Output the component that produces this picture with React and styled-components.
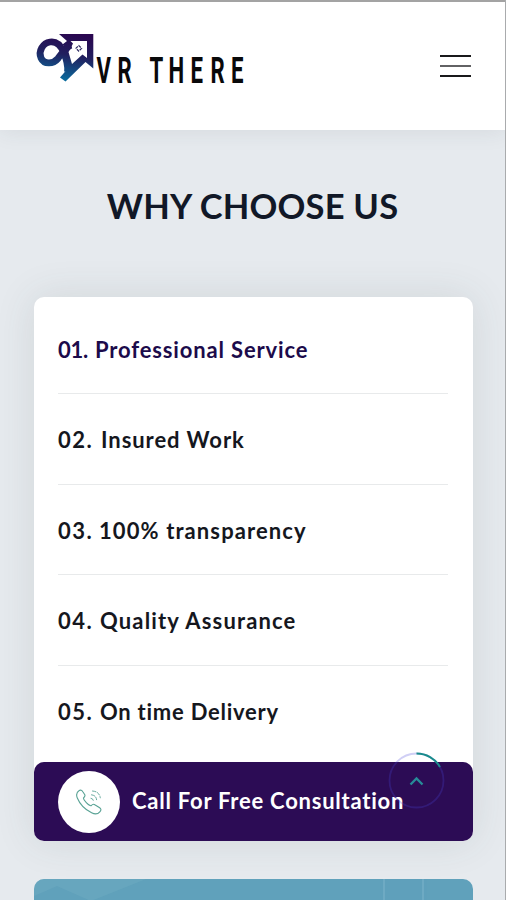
import React from "react";
import styled, { createGlobalStyle } from "styled-components";

const GlobalStyle = createGlobalStyle`
  * {
    box-sizing: border-box;
  }
  body {
    margin: 0;
    background: #e6eaee;
    font-family: Lato, "Open Sans", sans-serif;
  }
`;

const Page = styled.div`
  position: relative;
  height: 900px;
  overflow: hidden;
  background: #e6eaee;
  border-right: 1px solid #a9abad;
`;

const Header = styled.header`
  position: relative;
  display: flex;
  align-items: flex-start;
  justify-content: space-between;
  height: 130px;
  padding: 28px 34px 0 34px;
  background: #fff;
  border-top: 2px solid #a3a3a3;
  box-shadow: 0 0 22px rgba(40, 60, 70, 0.1);
`;

const Logo = styled.svg`
  display: block;
  width: 214px;
  height: 60px;
`;

const MenuButton = styled.button`
  display: flex;
  flex-direction: column;
  gap: 8px;
  margin-top: 25px;
  padding: 0;
  border: 0;
  background: none;

  span {
    width: 31px;
    height: 2px;
    background: #19191b;
  }
  span:nth-child(2) {
    background: #626264;
  }
`;

const Title = styled.h1`
  margin: 0;
  padding-top: 56px;
  height: 167px;
  color: #111827;
  font-size: 34.5px;
  font-weight: 700;
  line-height: 40px;
  text-align: center;
  white-space: nowrap;
  letter-spacing: 0.2px;
`;

const Card = styled.section`
  width: 439px;
  height: 544px;
  margin-left: 34px;
  display: flex;
  flex-direction: column;
  justify-content: space-between;
  border-radius: 10px;
  background: #fff;
  box-shadow: 0 0 40px rgba(60, 70, 70, 0.12);
`;

const List = styled.ul`
  margin: 0;
  padding: 6.5px 25px 0 24px;
  list-style: none;
`;

const Item = styled.li`
  display: flex;
  align-items: center;
  height: 90.5px;
  padding-top: 3px;
  border-bottom: 1px solid ${({ $last }) => ($last ? "transparent" : "#e8eaeb")};
  color: ${({ $active }) => ($active ? "#1c0b4b" : "#15171e")};
  font-size: 22px;
  font-weight: 700;
  line-height: 28px;
  white-space: nowrap;
  letter-spacing: ${({ $spacing }) => $spacing}px;
`;

const ItemNumber = styled.span`
  width: ${({ $width }) => $width}px;
  letter-spacing: ${({ $width }) => ($width > 40 ? 1.5 : -0.3)}px;
`;

const CallBar = styled.a`
  display: flex;
  align-items: center;
  gap: 12px;
  flex: none;
  height: 79px;
  padding-left: 24px;
  border-radius: 10px;
  background: #2c0c55;
  color: #fff;
  font-size: 22px;
  font-weight: 700;
  white-space: nowrap;
  letter-spacing: 0.76px;
`;

const CallLabel = styled.span`
  padding-bottom: 3px;
`;

const CallIcon = styled.span`
  display: flex;
  align-items: center;
  justify-content: center;
  width: 62px;
  height: 62px;
  border-radius: 50%;
  background: #fff;
`;

const Banner = styled.svg`
  display: block;
  width: 439px;
  height: 60px;
  margin: 38px 0 0 34px;
  border-radius: 10px;
  background: #60a1bb;
`;

const ScrollTop = styled.button`
  position: absolute;
  top: 752px;
  left: 388px;
  padding: 0;
  border: 0;
  background: none;

  svg {
    display: block;
  }
`;

const reasons = [
  { number: "01.", width: 37, text: "Professional Service", spacing: 0.85, active: true },
  { number: "02.", width: 43, text: "Insured Work", spacing: 0.93 },
  { number: "03.", width: 41, text: "100% transparency", spacing: 1.1 },
  { number: "04.", width: 42, text: "Quality Assurance", spacing: 1.15 },
  { number: "05.", width: 42, text: "On time Delivery", spacing: 0.75 },
];

const wordmark = [
  ["V", 96.5],
  ["R", 117.5],
  ["T", 149.5],
  ["H", 168.5],
  ["E", 190.5],
  ["R", 210.5],
  ["E", 231],
];

const BrandLogo = () => (
  <Logo viewBox="34 30 214 60" role="img" aria-label="VR There">
    <defs>
      <linearGradient id="brand" gradientUnits="userSpaceOnUse" x1="75" y1="34" x2="66" y2="82">
        <stop offset="0" stopColor="#2a0750" />
        <stop offset="0.45" stopColor="#21205f" />
        <stop offset="1" stopColor="#086fa0" />
      </linearGradient>
    </defs>
    {/* loop and crossing strokes */}
    <path
      d="M71 45 C66 47 62 53 58 58.5 C53 64.5 44 64.5 41 58 C38 51 43 43 50 42 C57 41 61 46 63.5 52 C66 58 68.5 64 67.5 72"
      fill="none"
      stroke="url(#brand)"
      strokeWidth="6.8"
    />
    {/* house shaped arrow */}
    <path
      fill="url(#brand)"
      fillRule="evenodd"
      d="M59 34 H93.3 V68.5 L85.5 62 L65.5 81.5 L60 77.5 L66.5 70 L64 56 L66 47.5 L62.5 44.5 L67 41 Z M70.5 41 L73 43.5 L71 47.5 L68.5 52 L72 64 L82.5 54.5 L87 58 V41 Z"
    />
    <path d="M78.8 45.5 L81.6 48.3 L78.8 51.1 L76 48.3 Z" fill="#fff" stroke="#2a275f" strokeWidth="1.2" strokeDasharray="2.8 1.1" />
    {wordmark.map(([letter, x]) => (
      <text
        key={x}
        transform={`translate(${x} 82.5) scale(0.6 1)`}
        fontFamily="Roboto, sans-serif"
        fontWeight="700"
        fontSize="37"
        fill="#09090a"
      >
        {letter}
      </text>
    ))}
  </Logo>
);

const PhoneIcon = () => (
  <svg width="28" height="28" viewBox="0 0 28 28" fill="none" stroke="#58a294" strokeWidth="1.1" strokeLinecap="round" strokeLinejoin="round">
    <path d="M4.2 2.5 C5.5 1.6 7 2.3 8 4 L9.8 6.8 C10.5 8.2 9.5 9 8.5 10 C8 12 14 18 16 17.8 C17.4 16.3 18.5 15.8 19.8 16.7 L24.7 19.7 C26.4 21 26.2 22.2 24.8 23.8 C23 26 20 26.5 16.6 24.8 C10.5 21.7 4.5 15.4 2.2 9.7 C1.1 6.8 1.6 4.2 4.2 2.5 Z" />
    <path d="M16 10.3 Q18 10.4 18.3 12.3 M16.5 6.8 Q21 7.2 21.6 11.7 M17.5 3 Q24.3 3.5 25.3 9.8" strokeWidth="0.9" strokeDasharray="3.4 1.6" />
  </svg>
);

const App = () => {
  return (
    <Page>
      <GlobalStyle />
      <Header>
        <BrandLogo />
        <MenuButton aria-label="Menu">
          <span />
          <span />
          <span />
        </MenuButton>
      </Header>
      <Title>WHY CHOOSE US</Title>
      <Card>
        <List>
          {reasons.map(({ number, width, text, spacing, active }, i) => (
            <Item key={text} $spacing={spacing} $active={active} $last={i === reasons.length - 1}>
              <ItemNumber $width={width}>{number}</ItemNumber>
              {text}
            </Item>
          ))}
        </List>
        <CallBar>
          <CallIcon>
            <PhoneIcon />
          </CallIcon>
          <CallLabel>Call For Free Consultation</CallLabel>
        </CallBar>
      </Card>
      <Banner viewBox="0 0 439 60">
        <path d="M0 17 L23 7 L57 22 L112 0 H0 Z" fill="#72aec4" opacity="0.4" />
        <path d="M350 0 V60 M389 0 V60" stroke="#78b1c8" strokeWidth="2" opacity="0.6" />
      </Banner>
      <ScrollTop aria-label="Back to top">
        <svg width="57" height="57" viewBox="0 0 57 57" fill="none">
          <circle cx="28.5" cy="28.5" r="27" stroke="#4b45d8" strokeOpacity="0.26" strokeWidth="1.8" />
          <path d="M28.5 1.5 A27 27 0 0 1 52 15" stroke="#188b8b" strokeWidth="2" />
          <path d="M22.5 32.5 L28.5 26.5 L34.5 32.5" stroke="#278b98" strokeWidth="2.3" />
        </svg>
      </ScrollTop>
    </Page>
  );
};

export default App;
